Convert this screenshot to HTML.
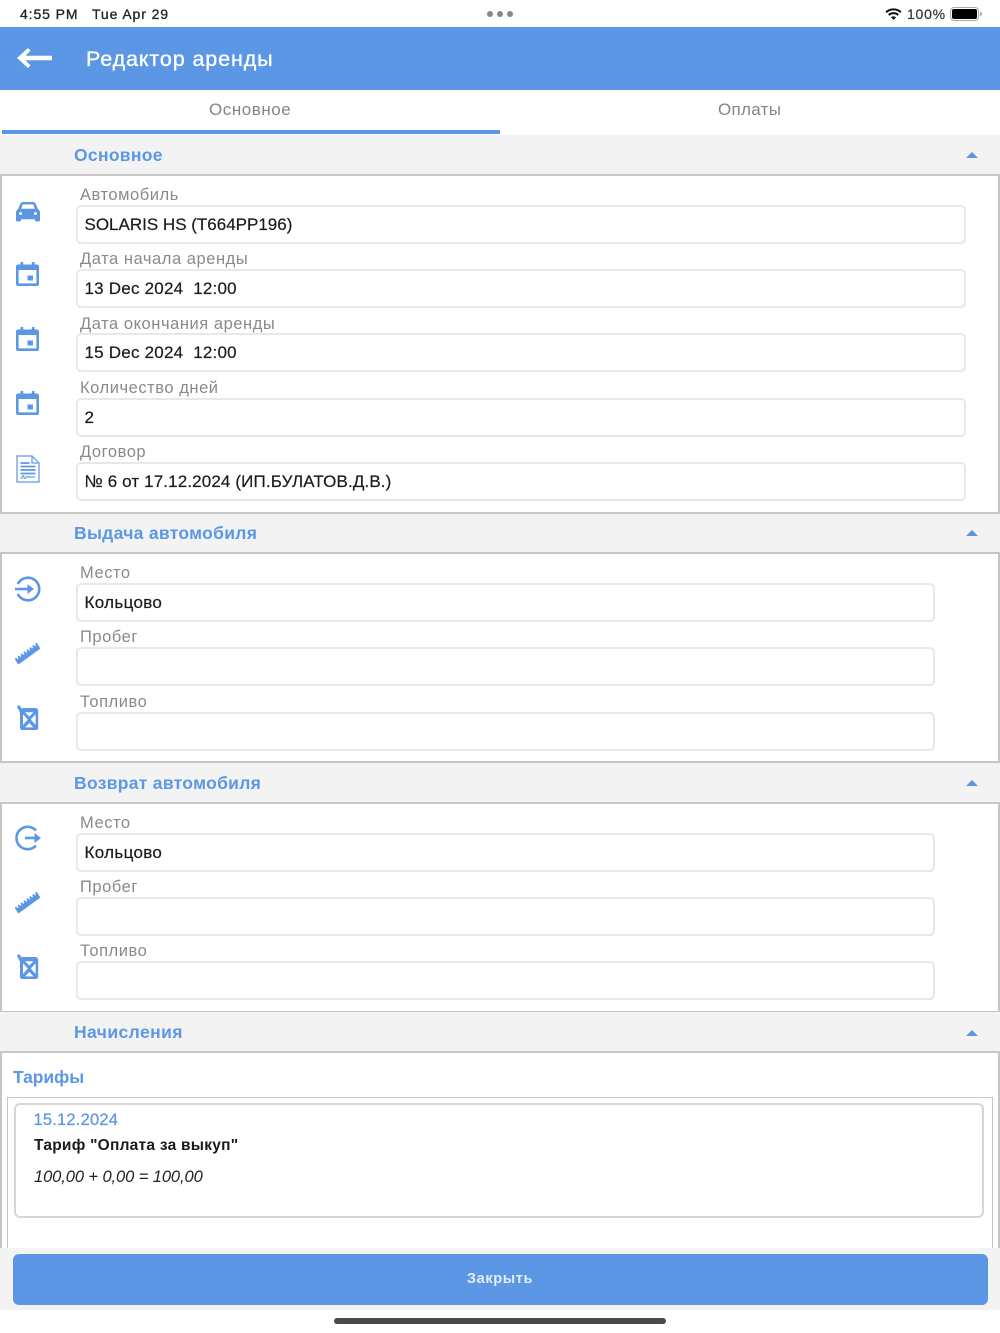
<!DOCTYPE html>
<html lang="ru"><head><meta charset="utf-8"><title>Редактор аренды</title>
<style>
*{box-sizing:border-box}
html,body{margin:0;padding:0;background:#fff}
#p{width:1000px;height:1333px;position:relative;overflow:hidden;background:#fff;font-family:"Liberation Sans","DejaVu Sans",sans-serif;color:#1c1c1c;filter:blur(.35px)}
.a,.l,.v,.h,.i,.f{position:absolute}
.a,.l,.v,.h{white-space:nowrap}
.l{left:80px;font-size:16.5px;line-height:20px;color:#8a8a8a;letter-spacing:.55px}
.v{left:84.5px;margin-top:1px;font-size:17px;line-height:22px;color:#1a1a1a;letter-spacing:.1px;-webkit-text-stroke:.2px #1a1a1a}
.i{left:76px;height:39px;border:2px solid #e8e8e8;border-radius:5px;background:#fff}
.h{left:74px;font-size:17.5px;line-height:22px;font-weight:bold;color:#5b97e5;letter-spacing:.3px}
.s{position:absolute;left:0;width:1000px;background:#f3f3f3}
.b{position:absolute;left:0;width:1000px;background:#fff;border:2px solid #c6c6c6}
.t{position:absolute;left:966px;width:0;height:0;border-left:6px solid transparent;border-right:6px solid transparent;border-bottom:6px solid #5b97e5}
svg{position:absolute;overflow:visible}
</style></head><body><div id="p">
<svg width="0" height="0" style="position:absolute"><defs>
<symbol id="car" viewBox="0 0 24 20"><path fill="#5b97e5" fill-rule="evenodd" d="M4.200 2C4.800.7 5.800 0 7 0h10c1.200 0 2.200.7 2.800 2L22 7.200c1.300.6 2 1.700 2 3V18c0 .8-.6 1.500-1.500 1.500h-2c-.8 0-1.500-.7-1.500-1.500v-.8H5v.8c0 .8-.7 1.500-1.500 1.500h-2C.6 19.500 0 18.800 0 18v-7.800c0-1.300.7-2.400 2-3zM5.200 6.800h13.600l-1.300-3.800c-.1-.4-.4-.6-.8-.6H7.300c-.4 0-.7.2-.8.600zM4.500 10a1.500 1.500 0 1 0 0 3 1.500 1.500 0 0 0 0-3zm15 0a1.500 1.500 0 1 0 0 3 1.500 1.500 0 0 0 0-3z"/></symbol>
<symbol id="cal" viewBox="0 0 23 24"><path fill="#5b97e5" fill-rule="evenodd" d="M4.500 0h2.700v2.500h8.600V0h2.700v2.500h2.500c1.100 0 2 .9 2 2V22c0 1.100-.9 2-2 2H2c-1.100 0-2-.9-2-2V4.500c0-1.100.9-2 2-2h2.500zM2.600 8v13.400h17.800V8z"/><rect x="11.500" y="13.500" width="5.500" height="5" fill="#5b97e5"/></symbol>
<symbol id="doc" viewBox="0 0 24 28"><path fill="none" stroke="#7aaaec" stroke-width="1.500" d="M1 1h15l7 7v19H1zM16 1v7h7"/><path fill="none" stroke="#5b97e5" stroke-width="1.700" d="M4.500 8h9M4.500 11.500h15M4.500 15h15M4.500 18.500h15"/><path fill="none" stroke="#6fa3ea" stroke-width="1.300" d="M5 24c2-4 3-4 3-2s1 2 2.500 0 1.500 1 3.500 0h5"/></symbol>
<symbol id="in" viewBox="0 0 26 26"><path fill="none" stroke="#5b97e5" stroke-width="2.600" d="M2.800 8A11.300 11.300 0 1 1 2.800 18"/><path fill="none" stroke="#5b97e5" stroke-width="2.600" d="M0 13h15"/><path fill="#5b97e5" d="M12.500 8l6.500 5-6.500 5z"/></symbol>
<symbol id="out" viewBox="0 0 26 26"><path fill="none" stroke="#5b97e5" stroke-width="2.600" d="M21 5.500A11.200 11.200 0 1 0 21 20.500"/><path fill="none" stroke="#5b97e5" stroke-width="2.600" d="M10 13h13"/><path fill="#5b97e5" d="M19.500 8l6.500 5-6.500 5z"/></symbol>
<symbol id="rul" viewBox="0 0 26 24"><path fill="none" stroke="#5b97e5" stroke-width="5" d="M2 21L24 5"/><path fill="none" stroke="#5b97e5" stroke-width="3" stroke-dasharray="2 1.600" d="M.5 18.500L22.500 2.500"/></symbol>
<symbol id="can" viewBox="0 0 22 25"><path fill="#5b97e5" d="M1.500 0l4.200 3H18c2 0 3.200 1.300 3.200 3.200V22.500c0 1.500-1 2.500-2.500 2.500H5.500C4 25 3 24 3 22.500V7.500L0 2z"/><path fill="#fff" d="M8 7.200h8.500l-4.200 4.300zM6 9.200v10.800l4.800-5.500zM18.600 9.200v10.800l-4.800-5.500zM8 22.400h8.500l-4.200-4.400z"/><path fill="#f3f7fd" d="M5.500 2.700L3 1.500l2 2.500z"/></symbol>
<symbol id="wifi" viewBox="0 0 18 13"><path fill="none" stroke="#111" stroke-width="2.200" d="M1 4.600C5.500.5 12.500.5 17 4.600M3.800 7.500c3-2.600 7.400-2.600 10.400 0"/><path fill="#111" d="M6.200 10c1.700-1.300 3.900-1.300 5.600 0L9 13z"/></symbol>
</defs></svg>

<!-- status bar -->
<div class="a" style="left:20px;top:5px;font-size:14px;line-height:18px;color:#222;letter-spacing:.9px;-webkit-text-stroke:.3px #222">4:55 PM</div>
<div class="a" style="left:92px;top:5px;font-size:14px;line-height:18px;color:#222;letter-spacing:.9px;-webkit-text-stroke:.3px #222">Tue Apr 29</div>
<div class="a" style="left:487px;top:11px;width:6px;height:6px;border-radius:50%;background:#888"></div>
<div class="a" style="left:497px;top:11px;width:6px;height:6px;border-radius:50%;background:#888"></div>
<div class="a" style="left:507px;top:11px;width:6px;height:6px;border-radius:50%;background:#888"></div>
<svg style="left:885px;top:8px" width="17" height="12"><use href="#wifi" width="17" height="12"/></svg>
<div class="a" style="left:907px;top:5px;font-size:14px;line-height:18px;color:#333;letter-spacing:.75px;-webkit-text-stroke:.2px #333">100%</div>
<div class="a" style="left:950px;top:7px;width:29px;height:14px;border:1px solid #aaa;border-radius:4px;padding:1px"><div style="width:100%;height:100%;background:#000;border-radius:2px"></div></div>
<div class="a" style="left:980px;top:12px;width:2px;height:4px;background:#aaa;border-radius:0 2px 2px 0"></div>

<!-- app bar -->
<div class="a" style="left:0;top:27px;width:1000px;height:63px;background:#5b97e5"></div>
<svg style="left:17px;top:47px" width="35" height="22" viewBox="0 0 35 22"><path fill="#fff" d="M0 11L11 1l2.500 2.600L8.500 8.800H35v4.400H8.500l5 5.200L11 21z"/></svg>
<div class="a" style="left:86px;top:45px;font-size:21.500px;line-height:28px;color:#fff;letter-spacing:.88px;-webkit-text-stroke:.35px #fff">Редактор аренды</div>

<!-- tabs -->
<div class="a" style="left:209px;top:100px;font-size:17px;line-height:20px;color:#858585;letter-spacing:.55px">Основное</div>
<div class="a" style="left:718px;top:100px;font-size:17px;line-height:20px;color:#858585;letter-spacing:.3px">Оплаты</div>
<div class="a" style="left:2px;top:130px;width:498px;height:3.500px;background:#5b97e5"></div>

<!-- section 1 -->
<div class="s" style="top:135px;height:40px"></div>
<div class="h" style="top:144px">Основное</div><div class="t" style="top:152px"></div>
<div class="b" style="top:174px;height:340px"></div>
<svg style="left:16px;top:202px" width="24" height="20"><use href="#car" width="24" height="20"/></svg>
<div class="l" style="top:185px">Автомобиль</div><div class="i" style="top:205px;width:890px"></div><div class="v" style="top:213px;letter-spacing:0">SOLARIS HS (Т664РР196)</div>
<svg style="left:16px;top:262px" width="23" height="24"><use href="#cal" width="23" height="24"/></svg>
<div class="l" style="top:249px">Дата начала аренды</div><div class="i" style="top:269px;width:890px"></div><div class="v" style="top:277px;letter-spacing:.22px">13 Dec 2024&nbsp; 12:00</div>
<svg style="left:16px;top:326.500px" width="23" height="24"><use href="#cal" width="23" height="24"/></svg>
<div class="l" style="top:314px">Дата окончания аренды</div><div class="i" style="top:333px;width:890px"></div><div class="v" style="top:341px;letter-spacing:.22px">15 Dec 2024&nbsp; 12:00</div>
<svg style="left:16px;top:391px" width="23" height="24"><use href="#cal" width="23" height="24"/></svg>
<div class="l" style="top:378px">Количество дней</div><div class="i" style="top:398px;width:890px"></div><div class="v" style="top:406px">2</div>
<svg style="left:16px;top:455px" width="24" height="28"><use href="#doc" width="24" height="28"/></svg>
<div class="l" style="top:442px">Договор</div><div class="i" style="top:462px;width:890px"></div><div class="v" style="top:470px;letter-spacing:.13px">№ 6 от 17.12.2024 (ИП.БУЛАТОВ.Д.В.)</div>

<!-- section 2 -->
<div class="s" style="top:514px;height:39px"></div>
<div class="h" style="top:522px">Выдача автомобиля</div><div class="t" style="top:530px"></div>
<div class="b" style="top:552px;height:211px"></div>
<svg style="left:15px;top:576px" width="26" height="26"><use href="#in" width="26" height="26"/></svg>
<div class="l" style="top:563px">Место</div><div class="i" style="top:583px;width:859px"></div><div class="v" style="top:591px;letter-spacing:.33px">Кольцово</div>
<svg style="left:15px;top:641px" width="26" height="25"><use href="#rul" width="26" height="25"/></svg>
<div class="l" style="top:627px">Пробег</div><div class="i" style="top:647px;width:859px"></div>
<svg style="left:17px;top:705px" width="22" height="25"><use href="#can" width="22" height="25"/></svg>
<div class="l" style="top:692px">Топливо</div><div class="i" style="top:712px;width:859px"></div>

<!-- section 3 -->
<div class="s" style="top:763px;height:39px"></div>
<div class="h" style="top:772px">Возврат автомобиля</div><div class="t" style="top:780px"></div>
<div class="b" style="top:801.500px;height:211px"></div>
<svg style="left:15px;top:825px" width="26" height="26"><use href="#out" width="26" height="26"/></svg>
<div class="l" style="top:813px">Место</div><div class="i" style="top:833px;width:859px"></div><div class="v" style="top:841px;letter-spacing:.33px">Кольцово</div>
<svg style="left:15px;top:890px" width="26" height="25"><use href="#rul" width="26" height="25"/></svg>
<div class="l" style="top:877px">Пробег</div><div class="i" style="top:897px;width:859px"></div>
<svg style="left:17px;top:954px" width="22" height="25"><use href="#can" width="22" height="25"/></svg>
<div class="l" style="top:941px">Топливо</div><div class="i" style="top:961px;width:859px"></div>

<!-- section 4 -->
<div class="s" style="top:1012px;height:40px"></div>
<div class="h" style="top:1021px;letter-spacing:.42px">Начисления</div><div class="t" style="top:1030px"></div>
<div class="b" style="top:1051px;height:210px"></div>
<div class="a" style="left:13px;top:1066px;font-size:17.500px;line-height:23px;font-weight:bold;color:#5b97e5;letter-spacing:-.1px">Тарифы</div>
<div class="a" style="left:7px;top:1097px;width:986px;height:170px;border:1.500px solid #c8c8c8"></div>
<div class="a" style="left:14px;top:1103px;width:970px;height:114.500px;border:2px solid #d6d6d6;border-radius:6px;background:#fff"></div>
<div class="a" style="left:33.500px;top:1110px;font-size:16.500px;line-height:21px;color:#5b97e5;letter-spacing:.2px;-webkit-text-stroke:.25px #5b97e5">15.12.2024</div>
<div class="a" style="left:34px;top:1136px;font-size:15.500px;line-height:20px;font-weight:bold;color:#1a1a1a;letter-spacing:.25px">Тариф "Оплата за выкуп"</div>
<div class="a" style="left:34px;top:1167px;font-size:16.500px;line-height:21px;font-style:italic;color:#222;letter-spacing:-.09px">100,00 + 0,00 = 100,00</div>

<!-- footer -->
<div class="a" style="left:0;top:1248px;width:1000px;height:62px;background:#f3f3f3"></div>
<div class="a" style="left:12.500px;top:1254px;width:975px;height:50.500px;background:#5b97e5;border-radius:6px"></div>
<div class="a" style="left:0;top:1270px;width:1000px;text-align:center;font-size:14.500px;line-height:18px;font-weight:bold;color:#e4edfa;letter-spacing:.65px">Закрыть</div>
<div class="a" style="left:334px;top:1318px;width:332px;height:6px;border-radius:3px;background:#4a4a4a"></div>
</div></body></html>
